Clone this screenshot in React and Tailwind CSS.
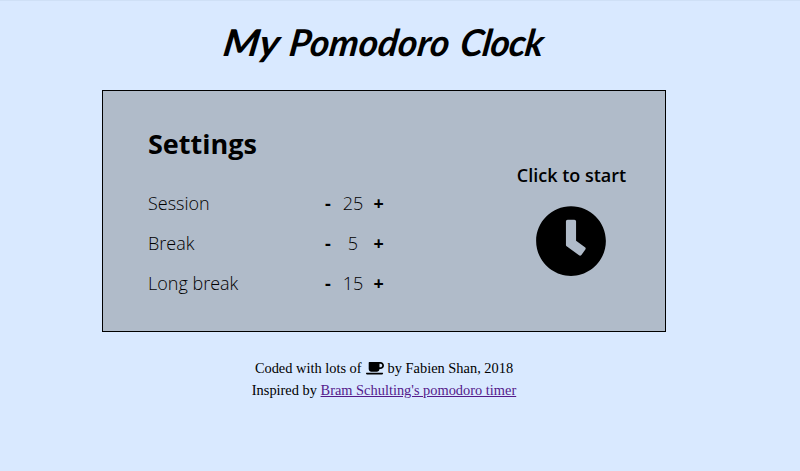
import { FaCoffee } from "react-icons/fa";

const rows = [
  { label: "Session", value: 25 },
  { label: "Break", value: 5 },
  { label: "Long break", value: 15 },
];

function ClockIcon() {
  return (
    <svg viewBox="0 0 512 512" className="block size-[72px] fill-black">
      <path d="M256 8C119 8 8 119 8 256s111 248 248 248 248-111 248-248S393 8 256 8zm57.1 350.1L224.9 294c-3.1-2.3-4.9-5.9-4.9-9.7V116c0-6.6 5.4-12 12-12h48c6.6 0 12 5.4 12 12v137.7l63.5 46.2c5.4 3.9 6.5 11.4 2.6 16.8l-28.2 38.8c-3.9 5.3-11.4 6.5-16.8 2.6z" />
    </svg>
  );
}

export default function App() {
  return (
    <div className="h-[471px] w-[800px] overflow-hidden border-t border-[#cfe0f6] bg-[#d9e9ff] text-black">
      <div className="flex w-[768px] flex-col items-center">
        <h1 className="flex h-[89px] w-[320px] items-start pt-[17px] font-['Lato','Open_Sans',sans-serif] text-[37px] leading-[48px] font-bold italic whitespace-nowrap">
          <span className="w-[66px]">
            <span className="inline-block origin-left scale-x-112 -skew-x-8">My</span>
          </span>
          <span className="w-[171px] -skew-x-8">Pomodoro</span>
          <span className="-skew-x-8 tracking-[-0.8px]">Clock</span>
        </h1>
        <main className="flex h-[242px] w-[564px] justify-between border border-black bg-[#b0bbc9] pl-[45px] font-['Open_Sans',sans-serif]">
          <section className="w-[240px] pt-[33px]">
            <h2 className="h-[59px] text-[27px] leading-[40px] font-bold">Settings</h2>
            {rows.map((row) => (
              <div key={row.label} className="flex h-10 items-center text-[18px] leading-[40px] font-light">
                <span className="w-[176px]">{row.label}</span>
                <button className="w-[8px] font-bold">-</button>
                <span className="w-[42px] text-center">{row.value}</span>
                <button className="-ml-[0.5px] font-bold">+</button>
              </div>
            ))}
          </section>
          <section className="flex w-[189px] flex-col items-center pt-[71px]">
            <p className="mb-[16px] pl-[2px] text-[18px] leading-[27px] font-semibold whitespace-nowrap">Click to start</p>
            <ClockIcon />
          </section>
        </main>
        <footer className="pt-[25px] text-center font-['Liberation_Serif',serif] text-[14.4px] leading-[22px]">
          <p className="flex items-center justify-center gap-[4px]">
            Coded with lots of
            <FaCoffee className="h-[14.4px] w-[18px]" />
            by Fabien Shan, 2018
          </p>
          <p>
            Inspired by <a className="text-[#551a8b] underline">Bram Schulting's pomodoro timer</a>
          </p>
        </footer>
      </div>
    </div>
  );
}
